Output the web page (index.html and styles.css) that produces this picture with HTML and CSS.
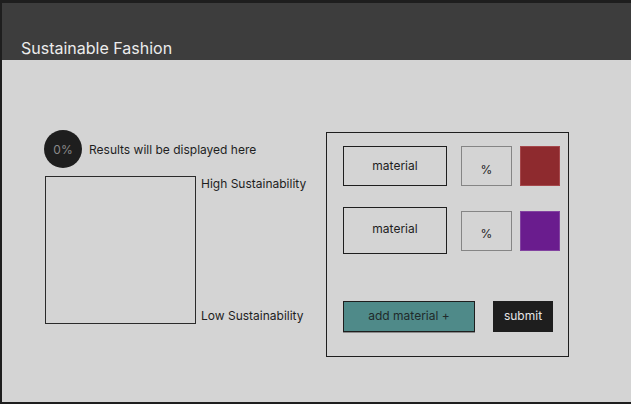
FILE: index.html
```html
<!DOCTYPE html>
<html lang="en">
<head>
  <meta charset="UTF-8" />
  <meta name="viewport" content="width=device-width, initial-scale=1.0" />
  <title>Sustainable Fashion</title>
  <link rel="stylesheet" href="styles.css">
</head>
<body>
  <div id="frame">
    <header id="topBar">
      <h1>Sustainable Fashion</h1>
    </header>

    <main id="content">
      <section id="results">
        <div class="result-head">
          <div class="score">0%</div>
          <p>Results will be displayed here</p>
        </div>
        <div class="scale">
          <div class="scale-box"></div>
          <div class="scale-labels">
            <span>High Sustainability</span>
            <span>Low Sustainability</span>
          </div>
        </div>
      </section>

      <section id="materials">
        <div class="material-row">
          <div class="material">material</div>
          <div class="percent">%</div>
          <div class="swatch red"></div>
        </div>
        <div class="material-row second">
          <div class="material tall">material</div>
          <div class="percent">%</div>
          <div class="swatch purple"></div>
        </div>
        <div class="actions">
          <button class="add">add material +</button>
          <button class="submit">submit</button>
        </div>
      </section>
    </main>
  </div>
</body>
</html>
```

FILE: styles.css
```css
* {
  box-sizing: border-box;
}

body {
  margin: 0;
  font-family: Inter, "Noto Sans", sans-serif;
  color: #1e1e1e;
  background-color: #1e1e1e;
}

#frame {
  height: 404px;
  border-top: 3px solid #1e1e1e;
  border-left: 2px solid #1e1e1e;
  border-bottom: 2px solid #1e1e1e;
  background-color: #d4d4d4;
  display: flex;
  flex-direction: column;
}

#topBar {
  height: 57px;
  background-color: #3d3d3d;
  display: flex;
  align-items: flex-end;
  padding: 0 0 2px 19px;
}
#topBar h1 {
  margin: 0;
  font-size: 16px;
  font-weight: 400;
  line-height: 20px;
  color: #ececec;
}

#content {
  flex: 1;
  display: flex;
  padding: 70px 0 0 42px;
}

#results {
  width: 282px;
}
.result-head {
  display: flex;
  align-items: center;
  gap: 7px;
}
.result-head p {
  margin: 0;
  font-size: 12px;
}
.score {
  width: 38px;
  height: 38px;
  border-radius: 50%;
  background-color: #1e1e1e;
  color: #8a8a8a;
  font-size: 12px;
  display: flex;
  align-items: center;
  justify-content: center;
}

.scale {
  display: flex;
  gap: 5px;
  margin: 8px 0 0 1px;
}
.scale-box {
  width: 151px;
  height: 148px;
  border: 1px solid #2a2a2a;
}
.scale-labels {
  display: flex;
  flex-direction: column;
  justify-content: space-between;
  font-size: 12px;
  line-height: 16px;
}

#materials {
  margin-top: 2px;
  width: 243px;
  height: 225px;
  border: 1px solid #1e1e1e;
  padding: 13px 0 0 16px;
}
.material-row {
  display: flex;
  align-items: center;
}
.material-row.second {
  margin-top: 21px;
}
.material {
  width: 104px;
  height: 40px;
  border: 1px solid #1e1e1e;
  font-size: 12px;
  display: flex;
  justify-content: center;
  align-items: center;
  padding-bottom: 2px;
}
.material.tall {
  height: 47px;
  padding-bottom: 4px;
}
.percent {
  width: 51px;
  height: 40px;
  margin-left: 14px;
  border: 1px solid #858585;
  font-size: 12px;
  display: flex;
  justify-content: center;
  align-items: center;
  padding-top: 6px;
}
.swatch {
  width: 40px;
  height: 40px;
  margin-left: 8px;
}
.red {
  background-color: #8e2a2e;
  border: 1px solid #a5474b;
}
.purple {
  background-color: #6a1c8e;
  border: 1px solid #8243a0;
}

.actions {
  display: flex;
  gap: 18px;
  margin-top: 47px;
}
.actions button {
  height: 31px;
  font-family: Inter, "Noto Sans", sans-serif;
  font-size: 12px;
  border: 1px solid #1e1e1e;
  cursor: pointer;
  padding: 0 0 2px;
}
.add {
  width: 132px;
  background-color: #4f8a89;
  color: #1f2b2b;
  box-shadow: 0 1px 0 #8a8a8a;
}
.submit {
  width: 60px;
  background-color: #1e1e1e;
  color: #e6e6e6;
}
```
